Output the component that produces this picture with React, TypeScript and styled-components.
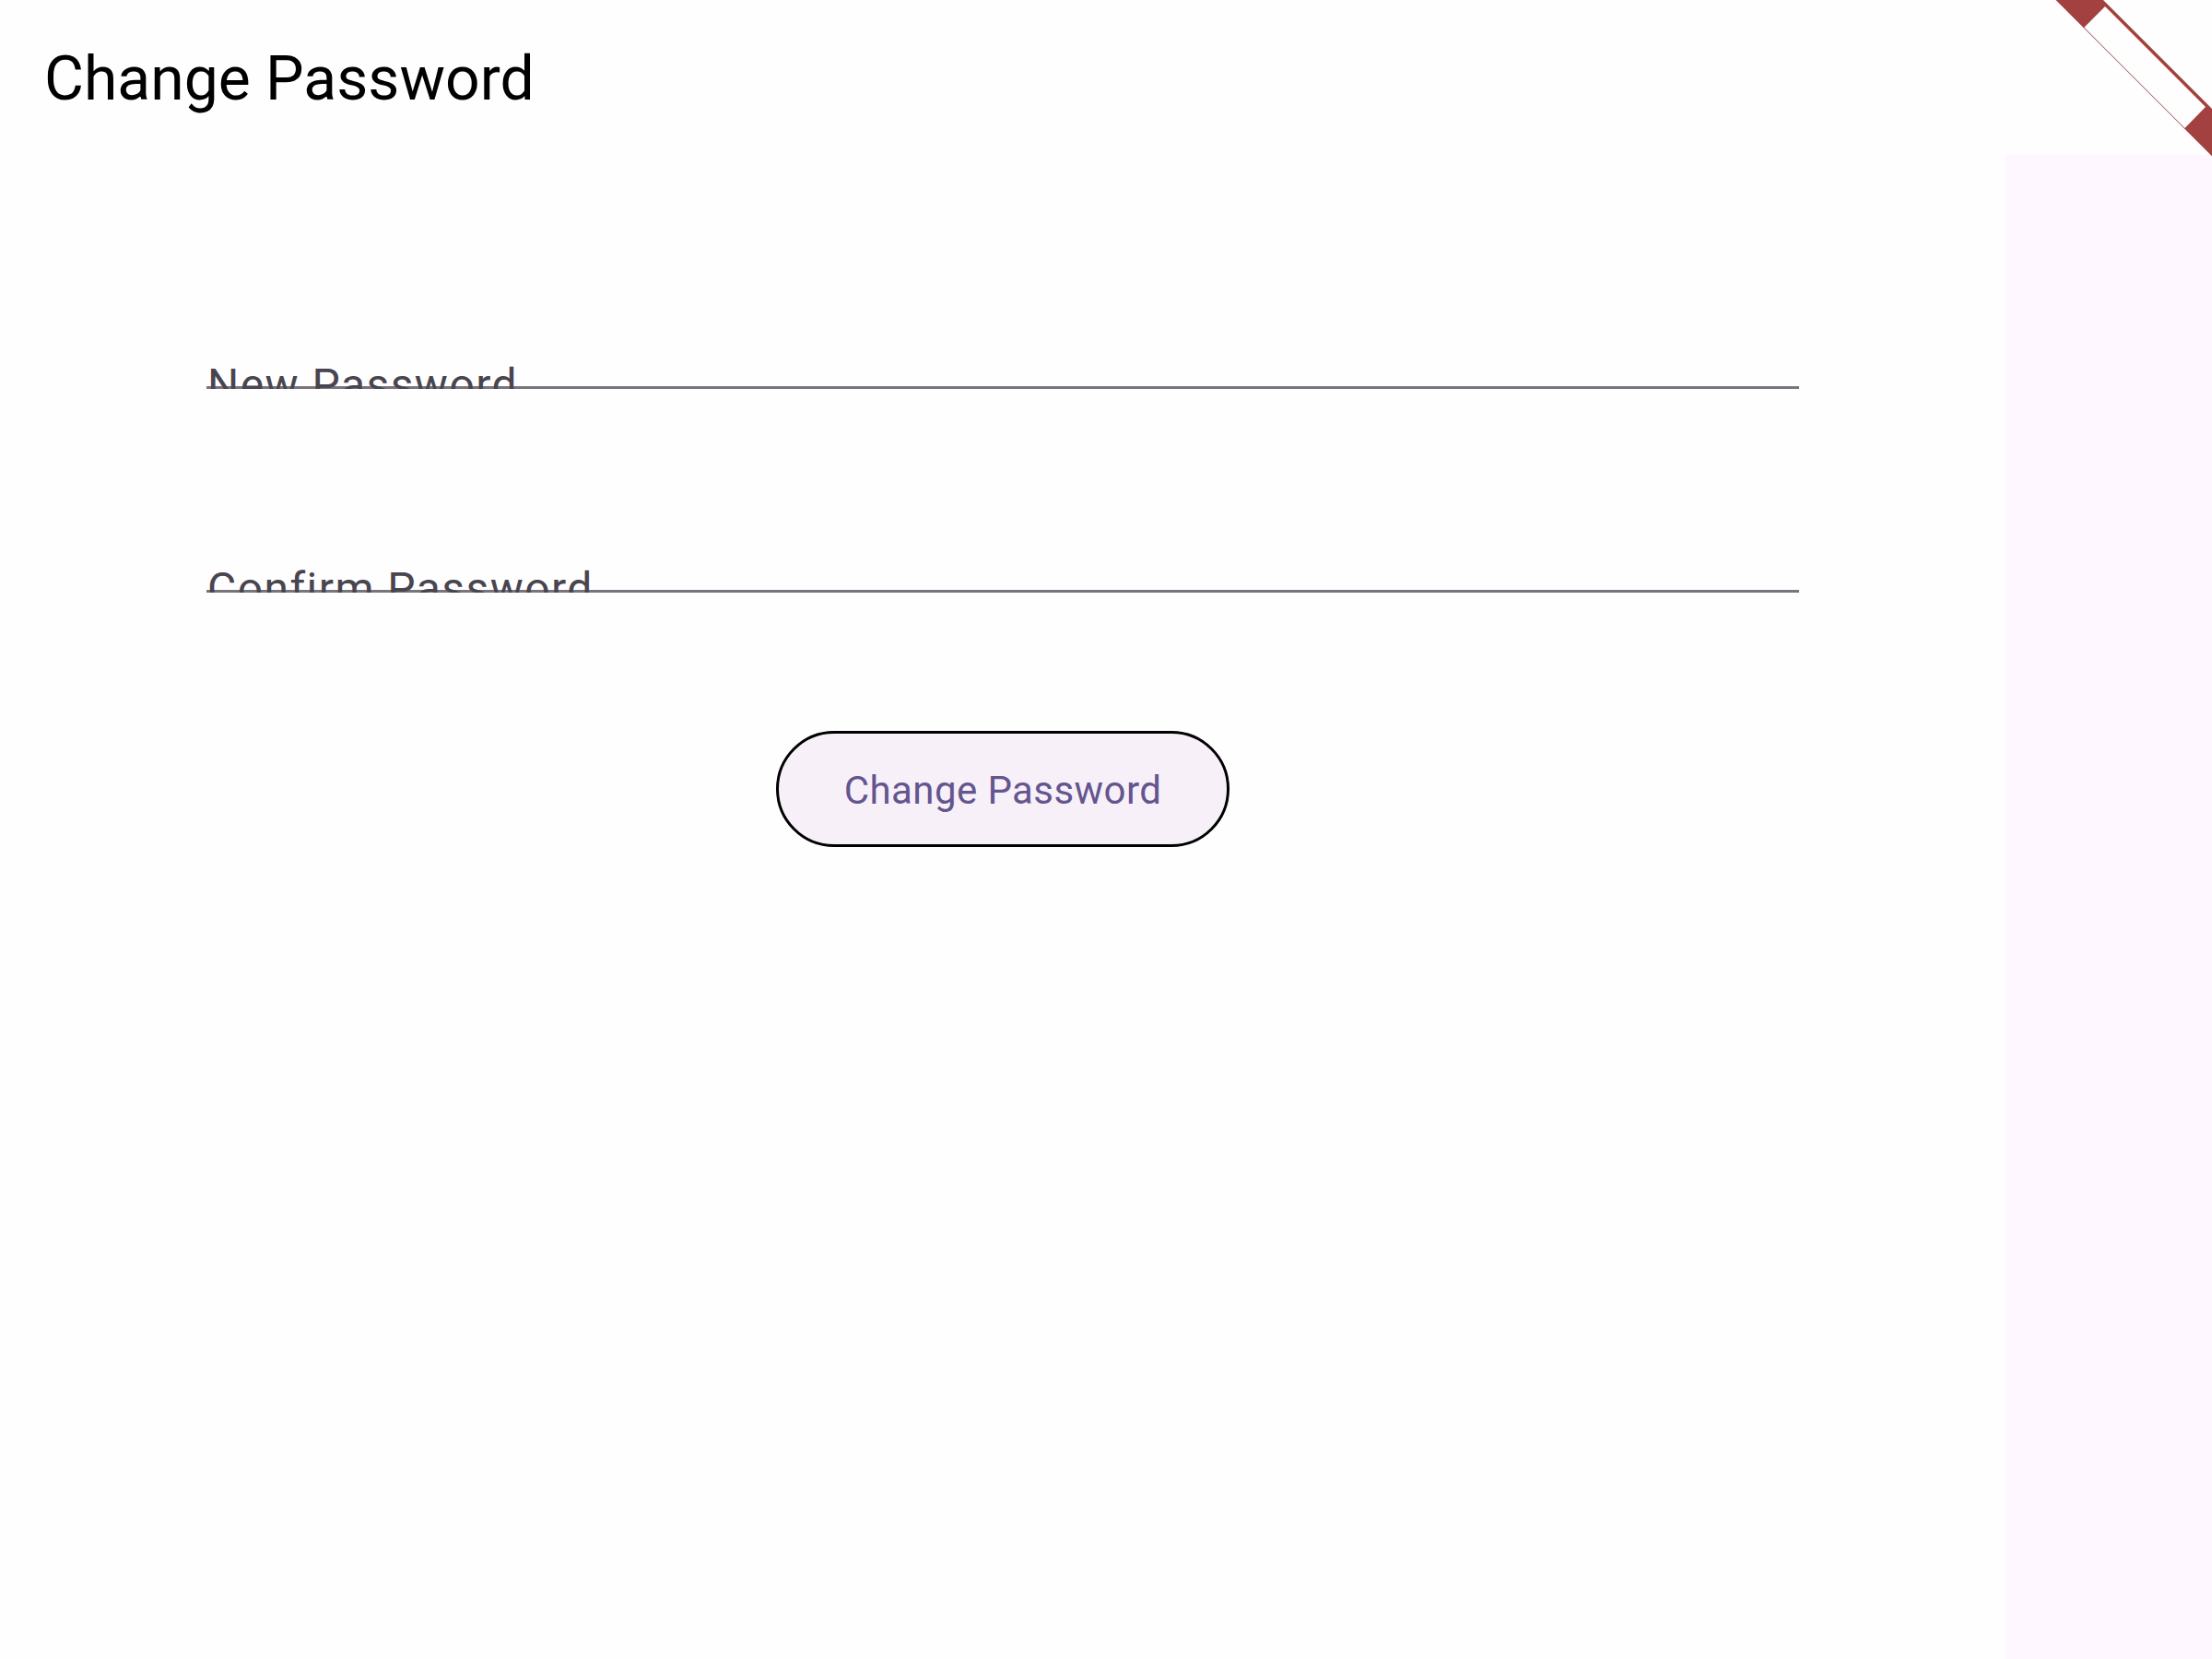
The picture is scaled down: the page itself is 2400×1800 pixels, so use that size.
import React from "react";
import styled, { createGlobalStyle } from "styled-components";

const GlobalStyle = createGlobalStyle`
  *, *::before, *::after { box-sizing: border-box; }
  body {
    margin: 0;
    background: #fef7ff;
    font-family: Roboto, "Liberation Sans", sans-serif;
  }
`;

const Screen = styled.div`
  min-height: 100vh;
  display: flex;
  flex-direction: column;
`;

const AppBar = styled.header`
  position: relative;
  display: flex;
  align-items: center;
  height: 168px;
  padding: 4px 48px 0;
  background: #fefefe;
`;

const Title = styled.h1`
  margin: 0;
  font-size: 66px;
  font-weight: 400;
  line-height: 84px;
  color: #000;
`;

const Ribbon = styled.svg`
  position: absolute;
  top: 0;
  right: 0;
  width: 170px;
  height: 170px;
`;

const Body = styled.main`
  flex: 1;
  display: flex;
  padding-right: 224px;
`;

const Form = styled.form`
  flex: 1;
  display: flex;
  flex-direction: column;
  padding: 214px 224px 0;
  background: #fefefe;
`;

const Fields = styled.div`
  display: grid;
  gap: 181px;
  margin-bottom: 150px;
`;

const Field = styled.div`
  display: grid;
  height: 40px;
  overflow: hidden;
`;

const Label = styled.label`
  grid-area: 1 / 1;
  z-index: 1;
  height: 40px;
  padding-left: 1px;
  font-size: 48px;
  line-height: 72px;
  letter-spacing: 0.03em;
  color: #49454f;
  pointer-events: none;
`;

const Input = styled.input`
  grid-area: 1 / 1;
  width: 100%;
  height: 40px;
  padding: 0;
  border: 0;
  border-bottom: 3px solid #79747e;
  outline: 0;
  background: transparent;
  font: inherit;
`;

const SubmitButton = styled.button`
  align-self: center;
  height: 126px;
  padding: 4px 71px 0;
  border: 3px solid #000;
  border-radius: 63px;
  background: #f7f0f9;
  font-family: inherit;
  font-size: 42px;
  line-height: 60px;
  letter-spacing: 0.01em;
  color: #65558f;
  cursor: pointer;
`;

const PasswordField = ({ id, label }: { id: string; label: string }) => (
  <Field>
    <Label htmlFor={id}>{label}</Label>
    <Input id={id} type="password" autoComplete="new-password" />
  </Field>
);

export default function App() {
  return (
    <Screen>
      <GlobalStyle />
      <AppBar>
        <Title>Change Password</Title>
        <Ribbon viewBox="0 0 170 170" aria-hidden="true">
          <path d="M0.5 0H52L170 118V169.5Z" fill="#a34040" />
          <path d="M54 7L163 116L140.5 139L31.3 29.7Z" fill="#fefefe" />
        </Ribbon>
      </AppBar>
      <Body>
        <Form onSubmit={(event) => event.preventDefault()}>
          <Fields>
            <PasswordField id="new-password" label="New Password" />
            <PasswordField id="confirm-password" label="Confirm Password" />
          </Fields>
          <SubmitButton type="submit">Change Password</SubmitButton>
        </Form>
      </Body>
    </Screen>
  );
}
